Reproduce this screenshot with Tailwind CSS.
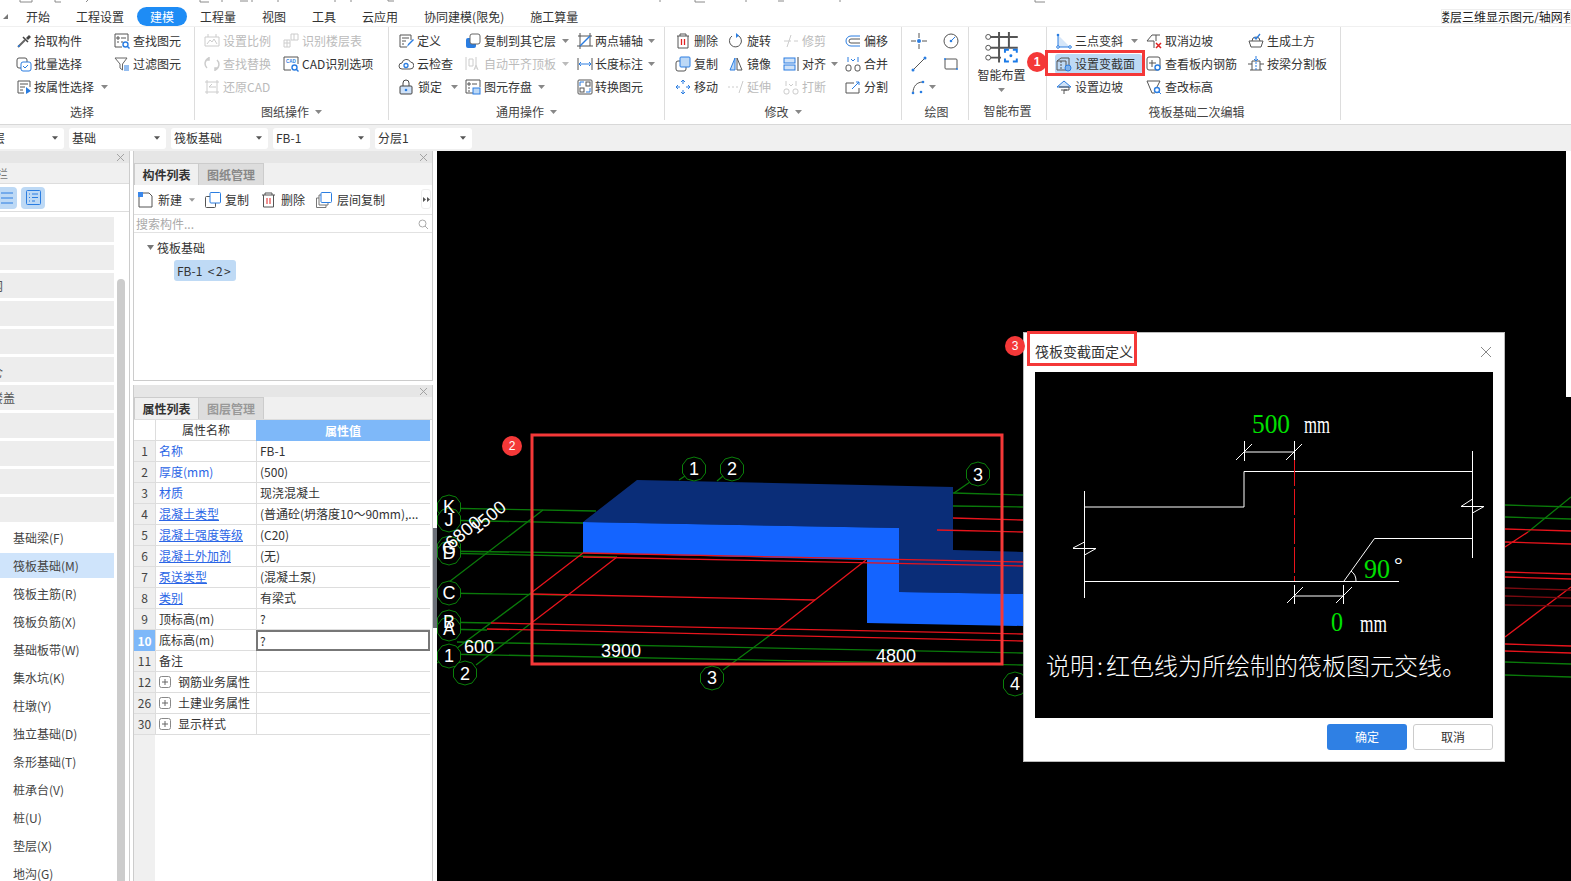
<!DOCTYPE html>
<html lang="zh">
<head>
<meta charset="utf-8">
<title>GTJ</title>
<script src="https://cdn.jsdelivr.net/npm/@tailwindcss/browser@4"></script>
</head>
<body class="m-0 w-[1571px] h-[881px] overflow-hidden bg-white font-['Noto_Sans_CJK_SC',sans-serif] text-[12px] leading-none text-[#333]">
<div class="relative w-[1571px] h-[881px] overflow-hidden flex flex-col">

<svg class="block w-[1571px] h-[7px] shrink-0" viewBox="0 0 1571 7" fill="none" stroke="#8a8a8a"><path d="M20 0v2h12v-2M55 0v2h6M88 0l-2 2M200 0v2h9M222 0v2M240 1h8M252 0v2M278 0v2M335 0v2M351 0v2M388 0v1h6M660 0v2M695 0v2h10M746 0v2M778 1h6M840 0v2M1035 0v2h10"/></svg>

<!-- tabs -->
<div class="h-[19px] shrink-0 flex items-center pl-[26px] gap-[26px] relative text-[12px] text-[#333]">
  <svg class="absolute left-[2px] top-[6px] w-[7px] h-[7px]" viewBox="0 0 7 7"><path d="M1 6h5V1z" fill="#777"/></svg>
  <span>开始</span><span>工程设置</span>
  <span class="-mx-[13px] px-[13px] h-[19px] flex items-center rounded-full bg-[#1e8cf5] text-white">建模</span>
  <span>工程量</span><span>视图</span><span>工具</span><span>云应用</span><span>协同建模(限免)</span><span>施工算量</span>
  <div class="absolute left-[1441px] top-[2px] w-[130px] h-[15px] overflow-hidden border border-[#eee] flex items-center whitespace-nowrap text-[#222]"><span class="-ml-[4px]">楼层三维显示图元/轴网有</span></div>
</div>

<!-- ribbon -->
<div class="h-[99px] shrink-0 border-t border-[#f0f0f0] border-b border-b-[#d8d8d8] flex items-start">

  <!-- 选择 -->
  <section class="w-[195px] h-[93px] border-r border-[#ddd] flex flex-col pt-[2px]">
    <div class="flex pl-[16px] h-[69px]">
      <div class="w-[98px] flex flex-col">
        <div class="h-[23px] flex items-center gap-[2px]"><svg class="w-4 h-4" viewBox="0 0 16 16" fill="none"><path d="M2 14l7-7" stroke="#666" stroke-width="2"/><path d="M7 4l5 5" stroke="#444" stroke-width="1.5"/><path d="M10 5l3-3 2 2-3 3z" fill="#444"/><circle cx="3" cy="13" r="1" fill="#2a7de1"/></svg><span>拾取构件</span></div>
        <div class="h-[23px] flex items-center gap-[2px]"><svg class="w-4 h-4" viewBox="0 0 16 16" fill="none"><rect x="1" y="2" width="10" height="10" rx="2" stroke="#555"/><rect x="5" y="6" width="10" height="9" rx="2" stroke="#2a7de1" fill="#fff"/><path d="M7 10l2 2 3-3" stroke="#2a7de1"/></svg><span>批量选择</span></div>
        <div class="h-[23px] flex items-center gap-[2px]"><svg class="w-4 h-4" viewBox="0 0 16 16" fill="none"><path d="M14 8V2H2v12h6M4 5h8M4 8h5M4 11h3" stroke="#555"/><path d="M10 8l5 4-5 3z" fill="#2a7de1"/></svg><span>按属性选择</span><svg class="w-[7px] h-[4px] ml-[5px]" viewBox="0 0 7 4"><path d="M0 0h7L3.500 4z" fill="#888"/></svg></div>
      </div>
      <div class="flex flex-col">
        <div class="h-[23px] flex items-center gap-[3px]"><svg class="w-4 h-4" viewBox="0 0 16 16" fill="none"><path d="M8 14H1V1h13v7" stroke="#555"/><path d="M3 4h2v2H3zM7 5h5M3 9h2M7 9h2" stroke="#555"/><circle cx="11.500" cy="11.500" r="2.500" stroke="#2a7de1" stroke-width="1.400"/><path d="M13 13l2.500 2.500" stroke="#2a7de1" stroke-width="1.400"/></svg><span>查找图元</span></div>
        <div class="h-[23px] flex items-center gap-[3px]"><svg class="w-4 h-4" viewBox="0 0 16 16" fill="none"><path d="M1 2h12L8.500 8v6L6 12V8z" stroke="#666"/><path d="M10 10h5M10 12h5M10 14h5" stroke="#2a7de1"/></svg><span>过滤图元</span></div>
      </div>
    </div>
    <div class="mt-[5px] h-[18px] flex items-center justify-center pr-[30px] text-[#444]">选择</div>
  </section>

  <!-- 图纸操作 -->
  <section class="w-[194px] h-[93px] border-r border-[#ddd] flex flex-col pt-[2px]">
    <div class="flex pl-[9px] h-[69px]">
      <div class="w-[79px] flex flex-col text-[#bbb]">
        <div class="h-[23px] flex items-center gap-[3px]"><svg class="w-4 h-4" viewBox="0 0 16 16" fill="none" stroke="#ccc"><path d="M1 4h14v9H1zM4 1v3M12 1v3M3 11l3-4 2 2 2-3 3 5"/></svg><span>设置比例</span></div>
        <div class="h-[23px] flex items-center gap-[3px]"><svg class="w-4 h-4" viewBox="0 0 16 16" fill="none" stroke="#ccc" stroke-width="1.500"><path d="M5 2A6 6 0 0 0 3 12M11 14a6 6 0 0 0 2-10M5 1v3H2M11 15v-3h3"/></svg><span>查找替换</span></div>
        <div class="h-[23px] flex items-center gap-[3px]"><svg class="w-4 h-4" viewBox="0 0 16 16" fill="none" stroke="#ccc"><path d="M3 1v14M13 1v14M1 3h14M1 13h14M5 8h7M5 8l3-3"/></svg><span>还原CAD</span></div>
      </div>
      <div class="flex flex-col">
        <div class="h-[23px] flex items-center gap-[3px] text-[#bbb]"><svg class="w-4 h-4" viewBox="0 0 16 16" fill="none" stroke="#ccc"><path d="M8 1h7v6H8zM1 7h6v7H1zM11 1v6M4 7v7M1 10h6"/></svg><span>识别楼层表</span></div>
        <div class="h-[23px] flex items-center gap-[3px]"><svg class="w-4 h-4" viewBox="0 0 16 16" fill="none"><path d="M8 14H1V1h14v7" stroke="#555"/><text x="3" y="7" font-size="4.500" font-weight="700" fill="#2a7de1" font-family="Liberation Sans">CAD</text><circle cx="11.500" cy="11.500" r="2.500" stroke="#2a7de1" stroke-width="1.400"/><path d="M13 13l2.500 2.500" stroke="#2a7de1" stroke-width="1.400"/></svg><span>CAD识别选项</span></div>
        <div class="h-[23px]"></div>
      </div>
    </div>
    <div class="mt-[5px] h-[18px] flex items-center justify-center gap-[6px] text-[#444]">图纸操作<svg class="w-[7px] h-[4px]" viewBox="0 0 7 4"><path d="M0 0h7L3.500 4z" fill="#888"/></svg></div>
  </section>

  <!-- 通用操作 -->
  <section class="w-[276px] h-[93px] border-r border-[#ddd] flex flex-col pt-[2px]">
    <div class="flex pl-[9px] h-[69px]">
      <div class="w-[67px] flex flex-col">
        <div class="h-[23px] flex items-center gap-[3px]"><svg class="w-4 h-4" viewBox="0 0 16 16" fill="none"><path d="M13 7V2H2v12h7M4 5h7M4 8h4M4 11h2" stroke="#555"/><path d="M9 14l1-3 5-5 1 1-5 5z" fill="#2a7de1"/></svg><span>定义</span></div>
        <div class="h-[23px] flex items-center gap-[3px]"><svg class="w-4 h-4" viewBox="0 0 16 16" fill="none"><path d="M4 13a3 3 0 0 1 0-6 4.500 4.500 0 0 1 8.500-1A3.500 3.500 0 0 1 12 13z" stroke="#555"/><circle cx="8" cy="9.500" r="2" stroke="#2a7de1" stroke-width="1.300"/></svg><span>云检查</span></div>
        <div class="h-[23px] flex items-center gap-[4px]"><svg class="w-4 h-4" viewBox="0 0 16 16" fill="none"><rect x="2" y="7" width="12" height="8" rx="1" fill="#cfe2f8" stroke="#444"/><path d="M5 7V4a3 3 0 0 1 6 0v3" stroke="#444"/><circle cx="8" cy="11" r="1.300" fill="#2a7de1"/></svg><span>锁定</span><svg class="w-[7px] h-[4px] ml-[5px]" viewBox="0 0 7 4"><path d="M0 0h7L3.500 4z" fill="#888"/></svg></div>
      </div>
      <div class="w-[112px] flex flex-col">
        <div class="h-[23px] flex items-center gap-[3px]"><svg class="w-4 h-4" viewBox="0 0 16 16" fill="none"><rect x="1" y="5" width="10" height="10" rx="2" fill="#2a7de1"/><rect x="5" y="1" width="10" height="10" rx="2" fill="#fff" stroke="#666"/></svg><span class="whitespace-nowrap">复制到其它层</span><svg class="w-[7px] h-[4px] ml-[3px]" viewBox="0 0 7 4"><path d="M0 0h7L3.500 4z" fill="#888"/></svg></div>
        <div class="h-[23px] flex items-center gap-[3px] text-[#bbb]"><svg class="w-4 h-4" viewBox="0 0 16 16" fill="none" stroke="#ccc"><path d="M1 1v13M4 3h4v7H4zM11 1v8M9 14l2-5 2 5M10 12h2"/></svg><span class="whitespace-nowrap">自动平齐顶板</span><svg class="w-[7px] h-[4px] ml-[3px]" viewBox="0 0 7 4"><path d="M0 0h7L3.500 4z" fill="#bbb"/></svg></div>
        <div class="h-[23px] flex items-center gap-[3px]"><svg class="w-4 h-4" viewBox="0 0 16 16" fill="none"><path d="M8 14H1V1h14v7" stroke="#555"/><path d="M3 4h2v2H3zM7 5h5M3 9h2M3 12h2" stroke="#555"/><rect x="8" y="9" width="7" height="6" fill="#bcd8f6" stroke="#2a7de1"/></svg><span>图元存盘</span><svg class="w-[7px] h-[4px] ml-[3px]" viewBox="0 0 7 4"><path d="M0 0h7L3.500 4z" fill="#888"/></svg></div>
      </div>
      <div class="flex flex-col">
        <div class="h-[23px] flex items-center gap-[2px]"><svg class="w-4 h-4" viewBox="0 0 16 16" fill="none"><path d="M3 0v16M0 13h16M13 0v13M1 3h14" stroke="#555"/><path d="M3 13L13 3" stroke="#2a7de1" stroke-width="1.500"/></svg><span>两点辅轴</span><svg class="w-[7px] h-[4px] ml-[3px]" viewBox="0 0 7 4"><path d="M0 0h7L3.500 4z" fill="#888"/></svg></div>
        <div class="h-[23px] flex items-center gap-[2px]"><svg class="w-4 h-4" viewBox="0 0 16 16" fill="none"><path d="M1 2v12M15 2v12" stroke="#555"/><path d="M2 8h12M2 8l2-2M2 8l2 2M14 8l-2-2M14 8l-2 2" stroke="#2a7de1"/></svg><span>长度标注</span><svg class="w-[7px] h-[4px] ml-[3px]" viewBox="0 0 7 4"><path d="M0 0h7L3.500 4z" fill="#888"/></svg></div>
        <div class="h-[23px] flex items-center gap-[2px]"><svg class="w-4 h-4" viewBox="0 0 16 16" fill="none"><rect x="1" y="1" width="14" height="14" rx="1" stroke="#555"/><rect x="9" y="3" width="4" height="4" stroke="#555"/><rect x="3" y="9" width="4" height="4" stroke="#555"/><path d="M3 7V3h4M13 9v4H9" stroke="#2a7de1"/></svg><span>转换图元</span></div>
      </div>
    </div>
    <div class="mt-[5px] h-[18px] flex items-center justify-center gap-[6px] text-[#444]">通用操作<svg class="w-[7px] h-[4px]" viewBox="0 0 7 4"><path d="M0 0h7L3.500 4z" fill="#888"/></svg></div>
  </section>

  <!-- 修改 -->
  <section class="w-[237px] h-[93px] border-r border-[#ddd] flex flex-col pt-[2px]">
    <div class="flex pl-[10px] h-[69px]">
      <div class="w-[53px] flex flex-col">
        <div class="h-[23px] flex items-center gap-[3px]"><svg class="w-4 h-4" viewBox="0 0 16 16" fill="none"><path d="M2 3h12M5 3V1h6v2M3 3v12h10V3" stroke="#555"/><path d="M6.500 6v6M9.500 6v6" stroke="#e02020" stroke-width="1.300"/></svg><span>删除</span></div>
        <div class="h-[23px] flex items-center gap-[3px]"><svg class="w-4 h-4" viewBox="0 0 16 16" fill="none"><rect x="1" y="5" width="10" height="10" rx="2" fill="#fff" stroke="#555"/><rect x="5" y="1" width="10" height="10" rx="1" fill="#bcd8f6" stroke="#2a7de1"/></svg><span>复制</span></div>
        <div class="h-[23px] flex items-center gap-[3px]"><svg class="w-4 h-4" viewBox="0 0 16 16" fill="none" stroke="#2a7de1"><path d="M8 1v4M8 11v4M1 8h4M11 8h4M6 3l2-2 2 2M6 13l2 2 2-2M3 6L1 8l2 2M13 6l2 2-2 2"/></svg><span>移动</span></div>
      </div>
      <div class="w-[55px] flex flex-col">
        <div class="h-[23px] flex items-center gap-[3px]"><svg class="w-4 h-4" viewBox="0 0 16 16" fill="none"><path d="M10 2.500A6 6 0 1 1 4 3" stroke="#555"/><path d="M8 0l3 2.500L8 5z" fill="#2a7de1"/></svg><span>旋转</span></div>
        <div class="h-[23px] flex items-center gap-[3px]"><svg class="w-4 h-4" viewBox="0 0 16 16" fill="none"><path d="M7 2L2 14h5z" fill="#bcd8f6" stroke="#2a7de1"/><path d="M9 2l5 12H9z" stroke="#555"/></svg><span>镜像</span></div>
        <div class="h-[23px] flex items-center gap-[3px] text-[#bbb]"><svg class="w-4 h-4" viewBox="0 0 16 16" fill="none" stroke="#ccc"><path d="M0 8h2M4 8h2M8 8h2M11 14l4-12"/></svg><span>延伸</span></div>
      </div>
      <div class="w-[62px] flex flex-col">
        <div class="h-[23px] flex items-center gap-[3px] text-[#bbb]"><svg class="w-4 h-4" viewBox="0 0 16 16" fill="none" stroke="#ccc"><path d="M1 8h7M11 8h4M4 14l4-12"/></svg><span>修剪</span></div>
        <div class="h-[23px] flex items-center gap-[3px]"><svg class="w-4 h-4" viewBox="0 0 16 16" fill="none"><rect x="1" y="2" width="11" height="5" fill="#cfe2f8" stroke="#2a7de1"/><rect x="1" y="9" width="11" height="5" fill="#cfe2f8" stroke="#2a7de1"/><path d="M15 1v14" stroke="#444"/></svg><span>对齐</span><svg class="w-[7px] h-[4px] ml-[2px]" viewBox="0 0 7 4"><path d="M0 0h7L3.500 4z" fill="#888"/></svg></div>
        <div class="h-[23px] flex items-center gap-[3px] text-[#bbb]"><svg class="w-4 h-4" viewBox="0 0 16 16" fill="none" stroke="#ccc"><rect x="1" y="10" width="5" height="5" rx="2"/><rect x="10" y="10" width="5" height="5" rx="2"/><path d="M3 2v5M13 2v5M6 5l2 2 2-2"/></svg><span>打断</span></div>
      </div>
      <div class="flex flex-col">
        <div class="h-[23px] flex items-center gap-[3px]"><svg class="w-4 h-4" viewBox="0 0 16 16" fill="none"><path d="M15 3H6a5 5 0 0 0 0 10h9" stroke="#2a7de1"/><path d="M15 6H6a2 2 0 0 0 0 4h9" stroke="#555"/></svg><span>偏移</span></div>
        <div class="h-[23px] flex items-center gap-[3px]"><svg class="w-4 h-4" viewBox="0 0 16 16" fill="none"><rect x="1" y="9" width="5" height="6" rx="2" stroke="#555"/><rect x="10" y="9" width="5" height="6" rx="2" stroke="#555"/><path d="M3 1v5M13 1v5M6 3l2 2 2-2" stroke="#2a7de1"/></svg><span>合并</span></div>
        <div class="h-[23px] flex items-center gap-[3px]"><svg class="w-4 h-4" viewBox="0 0 16 16" fill="none"><path d="M9 4H1v10h13V9" stroke="#555"/><path d="M7 10l7-7M11 3h3v3" stroke="#2a7de1"/></svg><span>分割</span></div>
      </div>
    </div>
    <div class="mt-[5px] h-[18px] flex items-center justify-center gap-[6px] text-[#444]">修改<svg class="w-[7px] h-[4px]" viewBox="0 0 7 4"><path d="M0 0h7L3.500 4z" fill="#888"/></svg></div>
  </section>

  <!-- 绘图 -->
  <section class="w-[67px] h-[93px] border-r border-[#ddd] flex flex-col pt-[2px]">
    <div class="flex pl-[9px] h-[69px] gap-[16px]">
      <div class="w-4 flex flex-col">
        <div class="h-[23px] flex items-center"><svg class="w-4 h-4" viewBox="0 0 16 16" fill="none"><path d="M0 8h5M11 8h5M8 0v5M8 11v5" stroke="#555"/><circle cx="8" cy="8" r="2" fill="#2a7de1"/></svg></div>
        <div class="h-[23px] flex items-center"><svg class="w-4 h-4" viewBox="0 0 16 16" fill="none"><path d="M2 14L14 2" stroke="#555"/><circle cx="2" cy="14" r="1.500" fill="#2a7de1"/><circle cx="14" cy="2" r="1.500" fill="#2a7de1"/></svg></div>
        <div class="h-[23px] flex items-center"><svg class="w-4 h-4 shrink-0" viewBox="0 0 16 16" fill="none"><path d="M2 14C2 7 6 3 12 3" stroke="#555"/><circle cx="2" cy="14" r="1.300" fill="#2a7de1"/><circle cx="12" cy="3" r="1.300" fill="#2a7de1"/><circle cx="10" cy="13" r="1.300" fill="#2a7de1"/></svg><svg class="w-[7px] h-[4px] ml-[2px] shrink-0" viewBox="0 0 7 4"><path d="M0 0h7L3.500 4z" fill="#888"/></svg></div>
      </div>
      <div class="flex flex-col">
        <div class="h-[23px] flex items-center"><svg class="w-4 h-4" viewBox="0 0 16 16" fill="none"><circle cx="8" cy="8" r="7" stroke="#555"/><path d="M8 8l4-4" stroke="#2a7de1"/><circle cx="8" cy="8" r="1.300" fill="#2a7de1"/></svg></div>
        <div class="h-[23px] flex items-center"><svg class="w-4 h-4" viewBox="0 0 16 16" fill="none"><rect x="2" y="3" width="12" height="10" rx="1" stroke="#555"/><circle cx="2" cy="3" r="1" fill="#2a7de1"/><circle cx="14" cy="13" r="1" fill="#2a7de1"/></svg></div>
      </div>
    </div>
    <div class="mt-[5px] h-[18px] flex items-center justify-center pl-[3px] text-[#444]">绘图</div>
  </section>

  <!-- 智能布置 -->
  <section class="w-[78px] h-[93px] border-r border-[#ddd] flex flex-col items-center pt-[4px]">
    <svg class="w-[34px] h-[34px] block mr-[12px]" viewBox="0 0 34 34" fill="none"><path d="M3 6h30M3 17h30M3 27h13M14 1v31M24 1v16" stroke="#555" stroke-width="2"/><circle cx="3" cy="6" r="2.500" fill="#fff" stroke="#555"/><circle cx="3" cy="17" r="2.500" fill="#fff" stroke="#555"/><circle cx="3" cy="27" r="2.500" fill="#fff" stroke="#555"/><path d="M20 22v-3h4M28 19h4v3M32 28v3h-4M24 31h-4v-3" stroke="#1a7ae8" stroke-width="2"/><circle cx="26" cy="25" r="1.500" fill="#1a7ae8"/></svg>
    <div class="mt-[3px] h-[16px] flex items-center mr-[12px]">智能布置</div>
    <svg class="w-[7px] h-[4px] mt-[5px] mr-[12px]" viewBox="0 0 7 4"><path d="M0 0h7L3.500 4z" fill="#888"/></svg>
    <div class="mt-[10px] h-[18px] flex items-center text-[#444]">智能布置</div>
  </section>

  <!-- 筏板基础二次编辑 -->
  <section class="w-[294px] h-[93px] border-r border-[#ddd] flex flex-col pt-[2px]">
    <div class="flex pl-[8px] h-[69px]">
      <div class="w-[91px] flex flex-col">
        <div class="h-[23px] flex items-center gap-[3px] pl-[1px]"><svg class="w-4 h-4" viewBox="0 0 16 16" fill="none"><path d="M2 2L14 14H2z" fill="#d5e6f9"/><path d="M2 2v12h12" stroke="#2a7de1"/><circle cx="2" cy="2" r="1.300" fill="#2a7de1"/><circle cx="2" cy="14" r="1.300" fill="#fff" stroke="#2a7de1"/><circle cx="14" cy="14" r="1.300" fill="#fff" stroke="#2a7de1"/></svg><span>三点变斜</span><svg class="w-[7px] h-[4px] ml-[5px]" viewBox="0 0 7 4"><path d="M0 0h7L3.500 4z" fill="#888"/></svg></div>
        <div class="h-[23px] flex items-center"><div class="flex items-center gap-[3px] h-[20px] w-[87px] pl-[1px] rounded-[3px] bg-[#bdd9f5]"><svg class="w-4 h-4" viewBox="0 0 16 16" fill="none"><path d="M1 5l4-3h8v8" stroke="#555"/><path d="M1 5h9v9H1z" stroke="#555"/><path d="M5 5v9" stroke="#555" stroke-dasharray="2 1"/><circle cx="12" cy="12" r="3" fill="#7fb2ec" stroke="#2a7de1"/></svg><span>设置变截面</span></div></div>
        <div class="h-[23px] flex items-center gap-[3px] pl-[1px]"><svg class="w-4 h-4" viewBox="0 0 16 16" fill="none"><path d="M8 2L1 8h14z" fill="#cfe2f8" stroke="#2a7de1"/><path d="M3 8h10v3H8v4M5 11h6" stroke="#555"/></svg><span>设置边坡</span></div>
      </div>
      <div class="w-[102px] flex flex-col">
        <div class="h-[23px] flex items-center gap-[3px]"><svg class="w-4 h-4" viewBox="0 0 16 16" fill="none"><path d="M1 8l5-6h8M1 8h7v7M10 8V2" stroke="#555"/><path d="M10 10l5 5M15 10l-5 5" stroke="#e02020" stroke-width="1.500"/></svg><span>取消边坡</span></div>
        <div class="h-[23px] flex items-center gap-[3px]"><svg class="w-4 h-4" viewBox="0 0 16 16" fill="none"><rect x="1" y="1" width="13" height="13" rx="2" stroke="#555"/><path d="M3 7h7M6 4v7" stroke="#555"/><circle cx="11.500" cy="11.500" r="2.500" fill="#fff" stroke="#2a7de1" stroke-width="1.400"/></svg><span class="whitespace-nowrap">查看板内钢筋</span></div>
        <div class="h-[23px] flex items-center gap-[3px]"><svg class="w-4 h-4" viewBox="0 0 16 16" fill="none"><path d="M1 2h13l-3 6M1 2l5 12h3" stroke="#555"/><circle cx="11" cy="11" r="2.500" stroke="#2a7de1" stroke-width="1.400"/><path d="M13 13l2 2" stroke="#2a7de1"/></svg><span>查改标高</span></div>
      </div>
      <div class="flex flex-col">
        <div class="h-[23px] flex items-center gap-[3px]"><svg class="w-4 h-4" viewBox="0 0 16 16" fill="none"><path d="M1 8h14l-2 6H3z" stroke="#555"/><path d="M4 8a4 4 0 0 1 8 0" stroke="#555"/><path d="M6 4l2 2 4-5" stroke="#2a7de1" stroke-width="1.300"/></svg><span>生成土方</span></div>
        <div class="h-[23px] flex items-center gap-[3px]"><svg class="w-4 h-4" viewBox="0 0 16 16" fill="none"><path d="M0 8h4M12 8h4M4 5h8v9H4zM4 14H2M14 14h-2" stroke="#555"/><path d="M8 0v5M6 3l2 2 2-2" stroke="#2a7de1"/><path d="M8 6v8" stroke="#2a7de1" stroke-dasharray="2 1"/></svg><span class="whitespace-nowrap">按梁分割板</span></div>
        <div class="h-[23px]"></div>
      </div>
    </div>
    <div class="mt-[5px] h-[18px] flex items-center justify-center pl-[6px] text-[#444]">筏板基础二次编辑</div>
  </section>
</div>

<!-- selector bar -->
<div class="h-[26px] shrink-0 bg-[#f0f0f0] flex items-center gap-[5px] -ml-[33px]">
  <div class="w-[97px] h-[21px] pb-[1px] bg-white rounded-[3px] flex items-center justify-between pl-[14px] pr-[6px]"><span class="whitespace-nowrap">首层</span><svg class="w-[6px] h-[4px]" viewBox="0 0 7 4"><path d="M0 0h7L3.500 4z" fill="#555"/></svg></div>
  <div class="w-[97px] h-[21px] pb-[1px] bg-white rounded-[3px] flex items-center justify-between pl-[3px] pr-[6px]"><span>基础</span><svg class="w-[6px] h-[4px]" viewBox="0 0 7 4"><path d="M0 0h7L3.500 4z" fill="#555"/></svg></div>
  <div class="w-[97px] h-[21px] pb-[1px] bg-white rounded-[3px] flex items-center justify-between pl-[3px] pr-[6px]"><span>筏板基础</span><svg class="w-[6px] h-[4px]" viewBox="0 0 7 4"><path d="M0 0h7L3.500 4z" fill="#555"/></svg></div>
  <div class="w-[97px] h-[21px] pb-[1px] bg-white rounded-[3px] flex items-center justify-between pl-[3px] pr-[6px]"><span>FB-1</span><svg class="w-[6px] h-[4px]" viewBox="0 0 7 4"><path d="M0 0h7L3.500 4z" fill="#555"/></svg></div>
  <div class="w-[97px] h-[21px] pb-[1px] bg-white rounded-[3px] flex items-center justify-between pl-[3px] pr-[6px]"><span>分层1</span><svg class="w-[6px] h-[4px]" viewBox="0 0 7 4"><path d="M0 0h7L3.500 4z" fill="#555"/></svg></div>
</div>

<!-- main -->
<div class="flex-1 min-h-0 flex">

  <!-- left panel -->
  <div class="w-[130px] shrink-0 flex flex-col border-r border-[#ccc] overflow-hidden">
    <div class="h-[12px] shrink-0 bg-[#e6e6e6] flex items-center justify-end pr-[5px]"><svg class="w-[7px] h-[7px]" viewBox="0 0 8 8"><path d="M0 0l8 8M8 0L0 8" stroke="#999"/></svg></div>
    <div class="h-[21px] shrink-0 bg-[#f0f0f0] border-b border-[#ddd] flex items-center pt-[2px] -ml-[28px] text-[#777] whitespace-nowrap">导航栏</div>
    <div class="h-[28px] shrink-0 border-b border-[#ddd] flex items-center gap-[4px] -ml-[7px] bg-white">
      <div class="w-[24px] h-[22px] rounded-[4px] bg-[#bdd9f5] flex items-center justify-end pr-[4px]"><svg class="w-[12px] h-[12px]" viewBox="0 0 12 12"><path d="M0 1h12M0 6h12M0 11h12" stroke="#2a7de1"/></svg></div>
      <div class="w-[24px] h-[22px] rounded-[4px] bg-[#bdd9f5] flex items-center justify-center"><svg class="w-[15px] h-[15px]" viewBox="0 0 15 15" fill="none"><rect x=".5" y=".5" width="14" height="14" rx="1" stroke="#2a7de1"/><path d="M3 4h1M6 4h6M3 7.500h1M6 7.500h6M3 11h1M6 11h3" stroke="#2a7de1"/></svg></div>
    </div>
    <div class="flex flex-1 min-h-0">
      <div class="w-[114px] shrink-0 pt-[5px] flex flex-col gap-[3px]">
        <div class="h-[25px] shrink-0 bg-[#ededed]"></div>
        <div class="h-[25px] shrink-0 bg-[#ededed]"></div>
        <div class="h-[25px] shrink-0 bg-[#ededed] flex items-center -ml-[9px] text-[#555]">网</div>
        <div class="h-[25px] shrink-0 bg-[#ededed]"></div>
        <div class="h-[25px] shrink-0 bg-[#ededed]"></div>
        <div class="h-[25px] shrink-0 bg-[#ededed] flex items-center -ml-[9px] text-[#555] pt-[4px]">仑</div>
        <div class="h-[25px] shrink-0 bg-[#ededed] flex items-center -ml-[9px] text-[#555] whitespace-nowrap">楼盖</div>
        <div class="h-[25px] shrink-0 bg-[#ededed]"></div>
        <div class="h-[25px] shrink-0 bg-[#ededed]"></div>
        <div class="h-[25px] shrink-0 bg-[#ededed]"></div>
        <div class="h-[25px] shrink-0 bg-[#ededed]"></div>
        <div class="h-[25px] shrink-0 flex items-center pl-[13px] text-[#444]">基础梁(F)</div>
        <div class="h-[25px] shrink-0 flex items-center pl-[13px] text-[#444] bg-[#cfe4fb]">筏板基础(M)</div>
        <div class="h-[25px] shrink-0 flex items-center pl-[13px] text-[#444]">筏板主筋(R)</div>
        <div class="h-[25px] shrink-0 flex items-center pl-[13px] text-[#444]">筏板负筋(X)</div>
        <div class="h-[25px] shrink-0 flex items-center pl-[13px] text-[#444]">基础板带(W)</div>
        <div class="h-[25px] shrink-0 flex items-center pl-[13px] text-[#444]">集水坑(K)</div>
        <div class="h-[25px] shrink-0 flex items-center pl-[13px] text-[#444]">柱墩(Y)</div>
        <div class="h-[25px] shrink-0 flex items-center pl-[13px] text-[#444]">独立基础(D)</div>
        <div class="h-[25px] shrink-0 flex items-center pl-[13px] text-[#444]">条形基础(T)</div>
        <div class="h-[25px] shrink-0 flex items-center pl-[13px] text-[#444]">桩承台(V)</div>
        <div class="h-[25px] shrink-0 flex items-center pl-[13px] text-[#444]">桩(U)</div>
        <div class="h-[25px] shrink-0 flex items-center pl-[13px] text-[#444]">垫层(X)</div>
        <div class="h-[25px] shrink-0 flex items-center pl-[13px] text-[#444]">地沟(G)</div>
      </div>
      <div class="w-[8px] ml-[3px] mt-[67px] bg-[#ccc] rounded-t-[4px]"></div>
    </div>
  </div>

  <!-- middle -->
  <div class="w-[300px] shrink-0 ml-[3px] flex flex-col">
    <!-- component list -->
    <div class="h-[230px] shrink-0 border border-[#ccc] border-t-0 flex flex-col">
      <div class="h-[12px] shrink-0 bg-[#e6e6e6] flex items-center justify-end pr-[5px]"><svg class="w-[7px] h-[7px]" viewBox="0 0 8 8"><path d="M0 0l8 8M8 0L0 8" stroke="#999"/></svg></div>
      <div class="h-[22px] shrink-0 bg-[#f0f0f0] flex">
        <div class="w-[64px] flex items-center justify-center font-bold border-l border-t border-[#ccc]">构件列表</div>
        <div class="w-[66px] flex items-center justify-center font-bold text-[#888] bg-[#ddd] border border-b-0 border-[#ccc]">图纸管理</div>
      </div>
      <div class="h-[29px] pt-[1px] shrink-0 flex items-center pl-[4px] relative">
        <svg class="w-[16px] h-[16px]" viewBox="0 0 16 16" fill="none"><path d="M1 5v10h13V4l-3-3H5" stroke="#555"/><rect x="0" y="0" width="5" height="5" fill="#3a87ea"/></svg>
        <span class="ml-[4px]">新建</span><svg class="w-[6px] h-[4px] ml-[7px]" viewBox="0 0 7 4"><path d="M0 0h7L3.500 4z" fill="#999"/></svg>
        <svg class="w-[16px] h-[16px] ml-[10px]" viewBox="0 0 16 16" fill="none"><rect x=".5" y="4.500" width="10" height="11" rx="1" stroke="#555"/><rect x="5" y=".5" width="10.500" height="10.500" rx="1" fill="#fff" stroke="#2a7de1"/></svg>
        <span class="ml-[4px]">复制</span>
        <svg class="w-[13px] h-[16px] ml-[13px]" viewBox="0 0 13 16" fill="none"><path d="M0 3h13M3 3V1h7v2M1.500 3v12h10V3" stroke="#555"/><path d="M5 6v6M8 6v6" stroke="#e02020"/></svg>
        <span class="ml-[6px]">删除</span>
        <svg class="w-[16px] h-[16px] ml-[11px]" viewBox="0 0 16 16" fill="none"><path d="M3 6H.5v9.500H10V13M5 3H3v10h9v-2" stroke="#777"/><rect x="5" y=".5" width="10.500" height="10" rx="1" fill="#fff" stroke="#2a7de1"/></svg>
        <span class="ml-[5px]">层间复制</span>
        <div class="absolute right-[1px] top-[4px] w-[10px] h-[20px] border border-[#eee] rounded-[3px] flex items-center justify-center"><svg class="w-[7px] h-[5px]" viewBox="0 0 7 5"><path d="M0 0l3 2.500L0 5zM4 0l3 2.500L4 5z" fill="#555"/></svg></div>
      </div>
      <div class="h-[19px] shrink-0 border-y border-[#e2e2e2] flex items-center justify-between pl-[2px] pr-[4px] text-[#aaa]"><span>搜索构件...</span><svg class="w-[10px] h-[10px]" viewBox="0 0 10 10" fill="none"><circle cx="4.500" cy="4.500" r="3.500" stroke="#aaa"/><path d="M7 7l3 3" stroke="#aaa"/></svg></div>
      <div class="flex-1 pt-[3px] pl-[13px]">
        <div class="h-[23px] flex items-center gap-[2px]"><svg class="w-[7px] h-[5px] mr-[1px]" viewBox="0 0 7 5"><path d="M0 0h7L3.500 5z" fill="#777"/></svg><span>筏板基础</span></div>
        <div class="mt-[1px] ml-[27px] w-[62px] h-[21px] rounded-[3px] bg-[#bfdaf5] flex items-center pl-[3px] whitespace-pre">FB-1  <span class="tracking-[1.5px]">&lt;2&gt;</span></div>
      </div>
    </div>

    <!-- property list -->
    <div class="mt-[4px] flex-1 min-h-0 border-l border-r border-[#ccc] flex flex-col">
      <div class="h-[12px] shrink-0 bg-[#e6e6e6] flex items-center justify-end pr-[5px]"><svg class="w-[7px] h-[7px]" viewBox="0 0 8 8"><path d="M0 0l8 8M8 0L0 8" stroke="#999"/></svg></div>
      <div class="h-[23px] shrink-0 bg-[#f0f0f0] flex border-b border-[#ddd]">
        <div class="w-[64px] flex items-center justify-center font-bold border-l border-t border-[#ccc]">属性列表</div>
        <div class="w-[66px] flex items-center justify-center font-bold text-[#999] bg-[#ddd] border border-b-0 border-[#ccc]">图层管理</div>
      </div>
      <div class="grid grid-cols-[21px_101px_174px] auto-rows-[21px] w-[296px] shrink-0">
        <div class="h-[21px] border-b border-[#ddd] bg-white"></div><div class="border-b border-l border-[#ddd] flex items-center justify-center">属性名称</div><div class="bg-[#7eb8f9] text-white font-bold flex items-center justify-center">属性值</div>

        <div class="bg-[#eee] border-b border-[#ddd] flex items-center justify-center text-[#444]">1</div><div class="border-b border-l border-[#ddd] flex items-center pl-[3px] text-[#2b66e6]">名称</div><div class="border-b border-l border-[#ddd] flex items-center pl-[3px]">FB-1</div>
        <div class="bg-[#eee] border-b border-[#ddd] flex items-center justify-center text-[#444]">2</div><div class="border-b border-l border-[#ddd] flex items-center pl-[3px] text-[#2b66e6]">厚度(mm)</div><div class="border-b border-l border-[#ddd] flex items-center pl-[3px]">(500)</div>
        <div class="bg-[#eee] border-b border-[#ddd] flex items-center justify-center text-[#444]">3</div><div class="border-b border-l border-[#ddd] flex items-center pl-[3px] text-[#2b66e6]">材质</div><div class="border-b border-l border-[#ddd] flex items-center pl-[3px]">现浇混凝土</div>
        <div class="bg-[#eee] border-b border-[#ddd] flex items-center justify-center text-[#444]">4</div><div class="border-b border-l border-[#ddd] flex items-center pl-[3px] text-[#2b66e6]"><span class="underline underline-offset-[1px]">混凝土类型</span></div><div class="border-b border-l border-[#ddd] flex items-center pl-[3px] whitespace-nowrap overflow-hidden">(普通砼(坍落度10～90mm),...</div>
        <div class="bg-[#eee] border-b border-[#ddd] flex items-center justify-center text-[#444]">5</div><div class="border-b border-l border-[#ddd] flex items-center pl-[3px] text-[#2b66e6]"><span class="underline underline-offset-[1px]">混凝土强度等级</span></div><div class="border-b border-l border-[#ddd] flex items-center pl-[3px]">(C20)</div>
        <div class="bg-[#eee] border-b border-[#ddd] flex items-center justify-center text-[#444]">6</div><div class="border-b border-l border-[#ddd] flex items-center pl-[3px] text-[#2b66e6]"><span class="underline underline-offset-[1px]">混凝土外加剂</span></div><div class="border-b border-l border-[#ddd] flex items-center pl-[3px]">(无)</div>
        <div class="bg-[#eee] border-b border-[#ddd] flex items-center justify-center text-[#444]">7</div><div class="border-b border-l border-[#ddd] flex items-center pl-[3px] text-[#2b66e6]"><span class="underline underline-offset-[1px]">泵送类型</span></div><div class="border-b border-l border-[#ddd] flex items-center pl-[3px]">(混凝土泵)</div>
        <div class="bg-[#eee] border-b border-[#ddd] flex items-center justify-center text-[#444]">8</div><div class="border-b border-l border-[#ddd] flex items-center pl-[3px] text-[#2b66e6]"><span class="underline underline-offset-[1px]">类别</span></div><div class="border-b border-l border-[#ddd] flex items-center pl-[3px]">有梁式</div>
        <div class="bg-[#eee] border-b border-[#ddd] flex items-center justify-center text-[#444]">9</div><div class="border-b border-l border-[#ddd] flex items-center pl-[3px]">顶标高(m)</div><div class="border-b border-l border-[#ddd] flex items-center pl-[3px]">?</div>
        <div class="bg-[#7eb8f9] text-white font-bold flex items-center justify-center">10</div><div class="border-b border-l border-[#ddd] flex items-center pl-[3px]">底标高(m)</div><div class="border-2 border-[#777] flex items-center pl-[2px]">?</div>
        <div class="bg-[#eee] border-b border-[#ddd] flex items-center justify-center text-[#444]">11</div><div class="border-b border-l border-[#ddd] flex items-center pl-[3px]">备注</div><div class="border-b border-l border-[#ddd]"></div>
        <div class="bg-[#eee] border-b border-[#ddd] flex items-center justify-center text-[#444]">12</div><div class="border-b border-l border-[#ddd] flex items-center pl-[3px] gap-[7px]"><svg class="w-[12px] h-[12px]" viewBox="0 0 12 12" fill="none"><rect x=".5" y=".5" width="11" height="11" rx="2" stroke="#888"/><path d="M3 6h6M6 3v6" stroke="#666"/></svg>钢筋业务属性</div><div class="border-b border-l border-[#ddd]"></div>
        <div class="bg-[#eee] border-b border-[#ddd] flex items-center justify-center text-[#444]">26</div><div class="border-b border-l border-[#ddd] flex items-center pl-[3px] gap-[7px]"><svg class="w-[12px] h-[12px]" viewBox="0 0 12 12" fill="none"><rect x=".5" y=".5" width="11" height="11" rx="2" stroke="#888"/><path d="M3 6h6M6 3v6" stroke="#666"/></svg>土建业务属性</div><div class="border-b border-l border-[#ddd]"></div>
        <div class="bg-[#eee] border-b border-[#ddd] flex items-center justify-center text-[#444]">30</div><div class="border-b border-l border-[#ddd] flex items-center pl-[3px] gap-[7px]"><svg class="w-[12px] h-[12px]" viewBox="0 0 12 12" fill="none"><rect x=".5" y=".5" width="11" height="11" rx="2" stroke="#888"/><path d="M3 6h6M6 3v6" stroke="#666"/></svg>显示样式</div><div class="border-b border-l border-[#ddd]"></div>
      </div>
      <div class="flex-1 w-[21px] bg-[#f0f0f0]"></div>
    </div>
  </div>

  <!-- canvas -->
  <div class="relative flex-1 min-w-0 ml-[4px] bg-black">
    <svg class="block w-full h-full" viewBox="437 151 1134 730" fill="none">
      <defs><polygon id="axis" points="0,-12 7,-10 11.500,-4 11.500,4 7,10 0,12 -7,10 -11.500,4 -11.500,-4 -7,-10" stroke="#0a7f0a" fill="#000"/></defs>
      <!-- green grid -->
      <g stroke="#0a7a0a" stroke-width="1.300">
        <path d="M437 508l159 3M437 520l146 3M437 551l146 2M437 553l180 4M437 593l131 2M437 622l54 1M437 629l50 1"/>
        <path d="M457 642L1023 653M441 654L1023 665M953 493L1023 495M953 506L1023 507"/>
        <path d="M1505 505L1571 507M1505 517L1571 519M1505 662L1571 664M1505 675L1571 677M1023 652h1"/>
        <path d="M543 510L449 582M437 663L531 593M476 665L530 624M723 670L769 636M954 493L970 482M679 480L685 476M717 481L723 476M1571 497L1528 532"/>
      </g>
      <!-- block -->
      <polygon points="637,480 953,487 953,550 1023,552 1023,594 899,592 899,528 583,522" fill="#0a2d78"/>
      <polygon points="583,522 899,528 899,592 1023,594 1023,626 867,623 867,560 583,553" fill="#1464ff"/>
      <!-- red lines -->
      <g stroke="#e8141c" stroke-width="1.300">
        <path d="M583 553L1023 562M583 557L1023 566M531 594L815 600M491 623L1023 634M487 629L1023 641M953 518L1023 520M937 530L1023 532"/>
        <path d="M531 593L583 553M530 624L568 595L617 557M769 636L866 560"/>
        <path d="M1505 529L1571 531M1505 542L1571 544M1505 572L1571 574M1505 577L1571 579M1528 532L1505 547M1571 587L1505 637M1505 644L1571 646M1505 651L1571 653"/>
        <path d="M1505 588L1571 590M1505 596L1571 598M1505 605L1571 606" stroke="#7a0a10"/>
      </g>
      <!-- axis bubbles -->
      <use href="#axis" x="694" y="469"/><use href="#axis" x="732" y="469"/><use href="#axis" x="978" y="474"/>
      <use href="#axis" x="449" y="507"/><use href="#axis" x="449" y="520"/><use href="#axis" x="449" y="548"/><use href="#axis" x="449" y="553"/><use href="#axis" x="449" y="593"/><use href="#axis" x="449" y="622"/><use href="#axis" x="449" y="629"/><use href="#axis" x="449" y="656"/><use href="#axis" x="465" y="673"/><use href="#axis" x="712" y="678"/><use href="#axis" x="1015" y="684"/>
      <g fill="#fff" font-family="Liberation Sans, sans-serif" font-size="18" text-anchor="middle">
        <text x="694" y="475">1</text><text x="732" y="475">2</text><text x="978" y="481">3</text>
        <text x="449" y="513">K</text><text x="449" y="526">J</text><text x="449" y="554">G</text><text x="449" y="559">D</text><text x="449" y="599">C</text><text x="449" y="628">B</text><text x="449" y="635">A</text><text x="449" y="662">1</text><text x="465" y="680">2</text><text x="712" y="684">3</text><text x="1015" y="690">4</text>
        <text x="479" y="653">600</text><text x="621" y="657">3900</text><text x="896" y="662">4800</text>
        <text transform="translate(492 522) rotate(-40)">1500</text>
        <text transform="translate(467 537) rotate(-40)">6800</text>
      </g>
      <!-- annotation -->
      <rect x="532" y="435" width="470" height="229" stroke="#f43838" stroke-width="3"/>
      <circle cx="512" cy="446" r="10" fill="#f43838"/>
      <text x="512" y="450" fill="#fff" font-size="12" text-anchor="middle" font-family="Liberation Sans, sans-serif">2</text>
    </svg>

    <div class="absolute right-0 top-0 w-[5px] h-[246px] bg-white"></div>

    <!-- dialog -->
    <div class="absolute left-[586px] top-[181px] w-[482px] h-[430px] bg-white border border-[#bbb] flex flex-col">
      <div class="relative h-[39px] shrink-0 pl-[11px] flex items-center text-[14px] text-[#333]">
        <span class="-mt-[3px]">筏板变截面定义</span>
        <div class="absolute left-[3px] -top-[2px] w-[110px] h-[35px] border-[3px] border-[#f43838]"></div>
        <div class="absolute -left-[19px] top-[3px] w-[20px] h-[20px] rounded-full bg-[#f43838] text-white flex items-center justify-center text-[12px] font-['Liberation_Sans',sans-serif]">3</div>
        <svg class="absolute right-[12px] top-[13px] w-[12px] h-[12px]" viewBox="0 0 12 12"><path d="M1 1l10 10M11 1L1 11" stroke="#888"/></svg>
      </div>
      <svg class="block mx-[11px] w-[458px] h-[346px] shrink-0 bg-black" viewBox="0 0 458 346" fill="none">
        <g stroke="#fff" stroke-width="1">
          <path d="M50 135H209V99.500H437M49.500 119V226M437.500 79V186M50 209.500H364M309 209L339.500 166.500H437"/>
          <path d="M209 80H259M209.500 69V89M259.500 69V89M201 88L217 72M251 88L267 72"/>
          <path d="M259 224H308M259.500 213V232M308.500 213V232M252 231L268 215M301 231L317 215"/>
          <path d="M38 176L49.500 170M38 176.500H61L49.500 183M426 134.500L437.500 127M426 134.500H449L437.500 141"/>
          <path d="M321 209A12 12 0 0 0 316 199"/>
        </g>
        <path d="M259.500 88V209" stroke="#e8141c" stroke-dasharray="26 3"/>
        <g font-family="Liberation Serif, serif">
          <text x="217" y="61" fill="#00e000" font-size="28" textLength="38" lengthAdjust="spacingAndGlyphs">500</text>
          <text x="269" y="61" fill="#fff" font-size="26" textLength="26" lengthAdjust="spacingAndGlyphs">mm</text>
          <text x="329" y="206" fill="#00e000" font-size="27" textLength="26" lengthAdjust="spacingAndGlyphs">90</text>
          <text x="359" y="200" fill="#fff" font-size="22">°</text>
          <text x="296" y="259" fill="#00e000" font-size="27" textLength="12" lengthAdjust="spacingAndGlyphs">0</text>
          <text x="325" y="260" fill="#fff" font-size="26" textLength="27" lengthAdjust="spacingAndGlyphs">mm</text>
        </g>
        <text x="11" y="303" fill="#fff" font-size="24" font-weight="300" font-family="Noto Sans CJK SC, sans-serif">说明<tspan dx="3">:</tspan><tspan dx="3">红色线为所绘制的筏板图元交线。</tspan></text>
      </svg>
      <div class="flex justify-end gap-[6px] pr-[11px] mt-[6px]">
        <div class="w-[80px] h-[26px] rounded-[3px] bg-[#2f80e4] text-white flex items-center justify-center">确定</div>
        <div class="w-[80px] h-[26px] rounded-[3px] border border-[#ccc] bg-white flex items-center justify-center">取消</div>
      </div>
    </div>
  </div>
</div>

<!-- vertical splitter handle -->
<div class="absolute left-[433px] top-[528px] w-[4px] h-[100px] bg-[#6b7078]"></div>

<!-- annotation 1 -->
<div class="absolute left-[1045px] top-[50px] w-[100px] h-[26px] border-[3px] border-[#f43838]"></div>
<div class="absolute left-[1027px] top-[52px] w-[20px] h-[20px] rounded-full bg-[#f43838] text-white flex items-center justify-center text-[12px] font-bold font-['Liberation_Sans',sans-serif]">1</div>

</div>
</body>
</html>
